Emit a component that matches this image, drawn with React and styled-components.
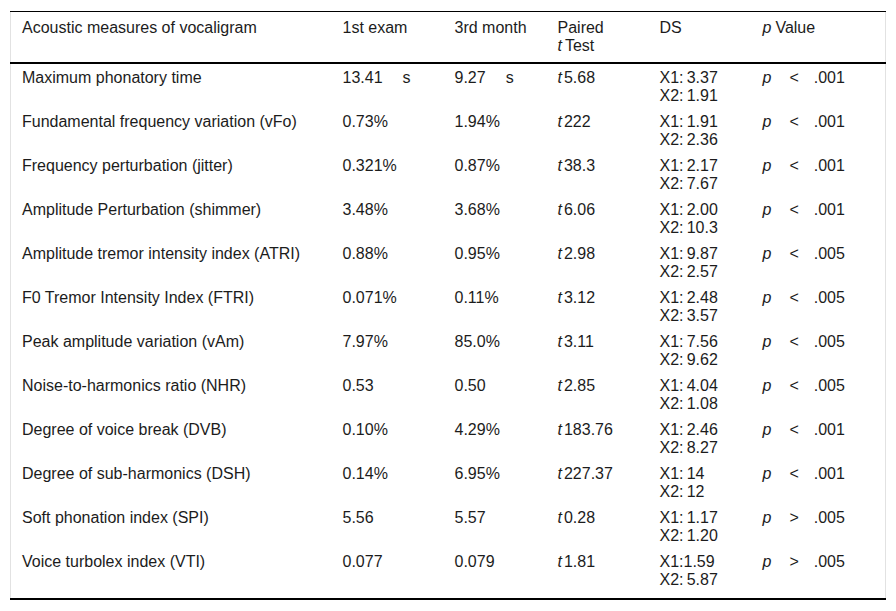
import React from "react";
import styled, { createGlobalStyle } from "styled-components";

const Global = createGlobalStyle`
  html, body { margin: 0; padding: 0; background: #fff; }
  body { font-family: "Liberation Sans", Arial, sans-serif; }
`;

const Wrap = styled.div`
  padding: 11px 10px 0 10px;
`;

const Table = styled.table`
  width: 876px;
  table-layout: fixed;
  border-collapse: collapse;
  border-left: 1px solid #e2e2e2;
  border-right: 1px solid #e2e2e2;
  font-size: 16px;
  line-height: 18px;
  color: #1c1c1c;
`;

const HeadRow = styled.tr`
  border-top: 1px solid #000;
  border-bottom: 2px solid #000;
`;

const Th = styled.th`
  box-sizing: border-box;
  text-align: left;
  font-weight: normal;
  vertical-align: top;
  padding: 7px 4px 7px 11px;
  width: ${(p) => (p.$w ? `${p.$w}px` : "auto")};
`;

const Row = styled.tr`
  &:last-child {
    border-bottom: 2px solid #000;
  }
  &:last-child td {
    padding-bottom: 9px;
  }
`;

const Td = styled.td`
  box-sizing: border-box;
  vertical-align: top;
  padding: 5px 4px 3px 11px;
  white-space: nowrap;
`;

const I = styled.i`
  margin-right: ${(p) => p.$gap || 0}px;
`;

const Unit = styled.span`
  margin-left: 20px;
`;

const Cmp = styled.span`
  display: inline-block;
  margin: 0 15px 0 18px;
`;

const Line = styled.div``;

const cols = [321, 112, 103, 102, 103];

const data = [
  ["Maximum phonatory time", "13.41", "9.27", "5.68", "X1:\u20093.37", "X2:\u20091.91", "<", ".001", true],
  ["Fundamental frequency variation (vFo)", "0.73%", "1.94%", "222", "X1:\u20091.91", "X2:\u20092.36", "<", ".001"],
  ["Frequency perturbation (jitter)", "0.321%", "0.87%", "38.3", "X1:\u20092.17", "X2:\u20097.67", "<", ".001"],
  ["Amplitude Perturbation (shimmer)", "3.48%", "3.68%", "6.06", "X1:\u20092.00", "X2:\u200910.3", "<", ".001"],
  ["Amplitude tremor intensity index (ATRI)", "0.88%", "0.95%", "2.98", "X1:\u20099.87", "X2:\u20092.57", "<", ".005"],
  ["F0 Tremor Intensity Index (FTRI)", "0.071%", "0.11%", "3.12", "X1:\u20092.48", "X2:\u20093.57", "<", ".005"],
  ["Peak amplitude variation (vAm)", "7.97%", "85.0%", "3.11", "X1:\u20097.56", "X2:\u20099.62", "<", ".005"],
  ["Noise-to-harmonics ratio (NHR)", "0.53", "0.50", "2.85", "X1:\u20094.04", "X2:\u20091.08", "<", ".005"],
  ["Degree of voice break (DVB)", "0.10%", "4.29%", "183.76", "X1:\u20092.46", "X2:\u20098.27", "<", ".001"],
  ["Degree of sub-harmonics (DSH)", "0.14%", "6.95%", "227.37", "X1:\u200914", "X2:\u200912", "<", ".001"],
  ["Soft phonation index (SPI)", "5.56", "5.57", "0.28", "X1:\u20091.17", "X2:\u20091.20", ">", ".005"],
  ["Voice turbolex index (VTI)", "0.077", "0.079", "1.81", "X1:1.59", "X2:\u20095.87", ">", ".005"],
];

export default function App() {
  return (
    <Wrap>
      <Global />
      <Table>
        <thead>
          <HeadRow>
            <Th $w={cols[0]}>Acoustic measures of vocaligram</Th>
            <Th $w={cols[1]}>1st exam</Th>
            <Th $w={cols[2]}>3rd month</Th>
            <Th $w={cols[3]}>
              <Line>Paired</Line>
              <Line>
                <I $gap={3}>t</I>Test
              </Line>
            </Th>
            <Th $w={cols[4]}>DS</Th>
            <Th>
              <I $gap={4}>p</I>Value
            </Th>
          </HeadRow>
        </thead>
        <tbody>
          {data.map((r) => (
            <Row key={r[0]}>
              <Td>{r[0]}</Td>
              <Td>
                {r[1]}
                {r[8] && <Unit>s</Unit>}
              </Td>
              <Td>
                {r[2]}
                {r[8] && <Unit>s</Unit>}
              </Td>
              <Td>
                <I $gap={2}>t</I>
                {r[3]}
              </Td>
              <Td>
                <Line>{r[4]}</Line>
                <Line>{r[5]}</Line>
              </Td>
              <Td>
                <I>p</I>
                <Cmp>{r[6]}</Cmp>
                {r[7]}
              </Td>
            </Row>
          ))}
        </tbody>
      </Table>
    </Wrap>
  );
}
